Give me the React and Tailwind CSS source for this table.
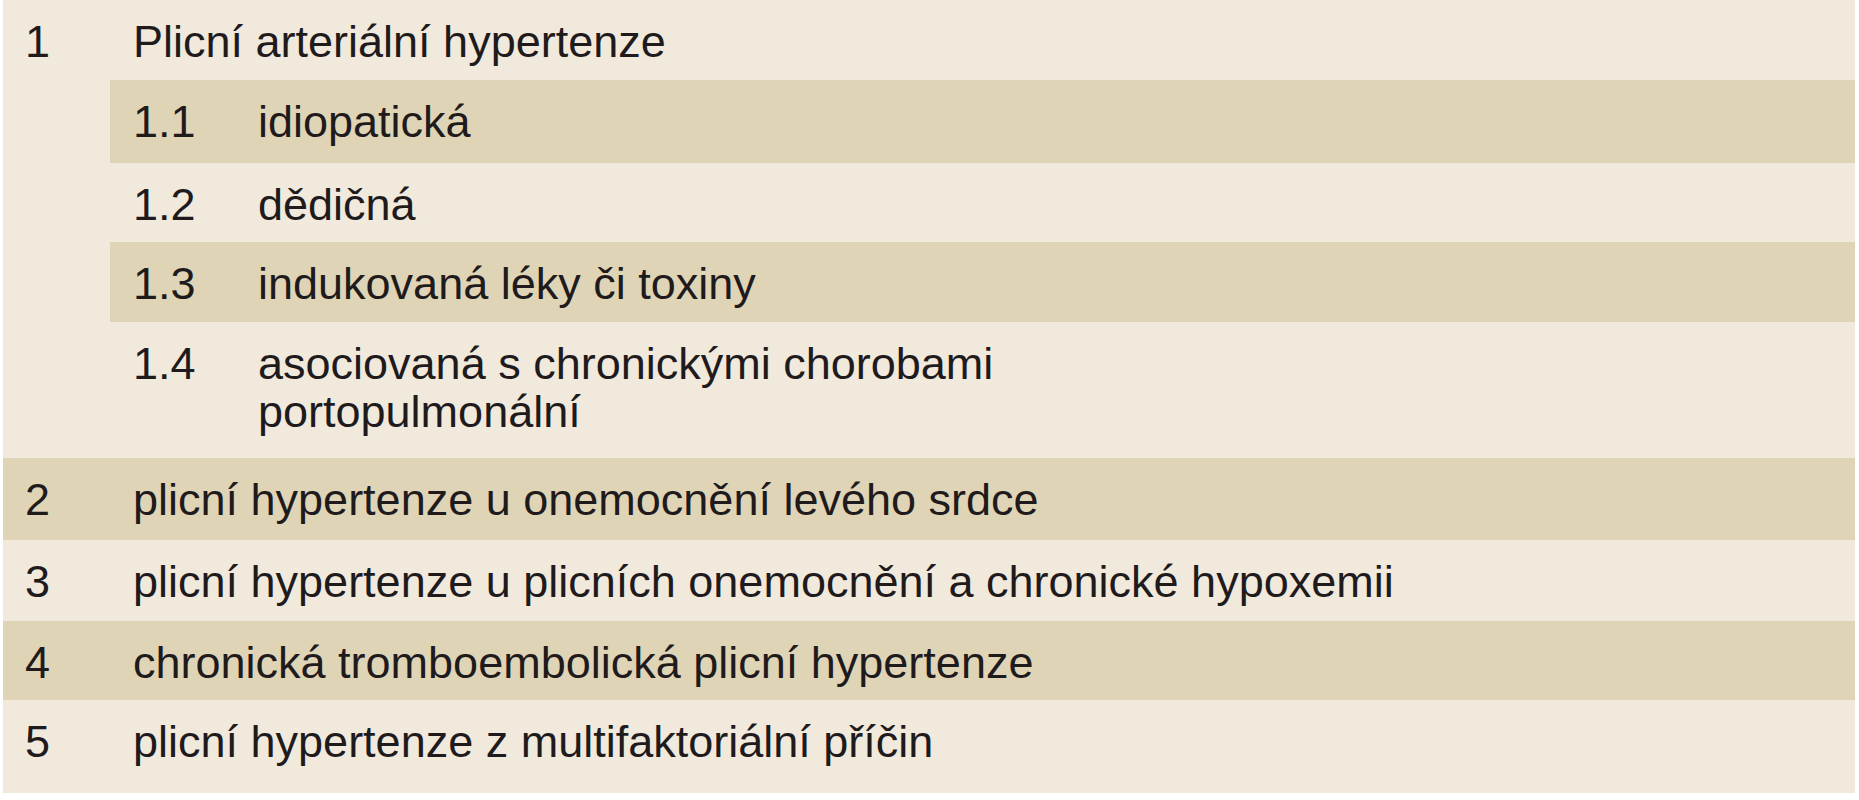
import React from 'react';

const groups = [
  {
    num: '1',
    text: 'Plicní arteriální hypertenze',
    pb: 'pb-[14px]',
    children: [
      { num: '1.1', text: ['idiopatická'], pb: 'pb-[17px]', band: true },
      { num: '1.2', text: ['dědičná'], pb: 'pb-[13px]', band: false },
      { num: '1.3', text: ['indukovaná léky či toxiny'], pb: 'pb-[14px]', band: true },
      { num: '1.4', text: ['asociovaná s chronickými chorobami', 'portopulmonální'], pb: 'pb-[22px]', band: false },
    ],
  },
  { num: '2', text: 'plicní hypertenze u onemocnění levého srdce', pb: 'pb-[16px]', band: true },
  { num: '3', text: 'plicní hypertenze u plicních onemocnění a chronické hypoxemii', pb: 'pb-[15px]', band: false },
  { num: '4', text: 'chronická tromboembolická plicní hypertenze', pb: 'pb-[13px]', band: true },
  { num: '5', text: 'plicní hypertenze z multifaktoriální příčin', pb: 'pb-[25px]', band: false },
];

export default function App() {
  return (
    <div className="w-full h-[800px] bg-white pl-[3px] pr-[4px] pb-[7px]">
      <div
        className="h-full bg-[#f0e9dc] text-[#1f1b1c] text-[45px] leading-[48px]"
        style={{ fontFamily: '"Liberation Sans", Arial, sans-serif' }}
      >
        {groups.map((g) => (
          <div key={g.num} className={g.band ? 'bg-[#dfd4b6]' : ''}>
            {/* Main row */}
            <div className={`flex pt-[18px] ${g.pb}`}>
              <div className="w-[130px] shrink-0 pl-[22px]">{g.num}</div>
              <div className="flex-1">{g.text}</div>
            </div>

            {/* Sub rows */}
            {g.children && g.children.map((c) => (
              <div
                key={c.num}
                className={`ml-[107px] flex pl-[23px] pt-[18px] ${c.pb} ${c.band ? 'bg-[#dfd4b6]' : ''}`}
              >
                <div className="w-[125px] shrink-0">{c.num}</div>
                <div className="flex-1">
                  {c.text.map((line) => (
                    <div key={line}>{line}</div>
                  ))}
                </div>
              </div>
            ))}
          </div>
        ))}
      </div>
    </div>
  );
}
